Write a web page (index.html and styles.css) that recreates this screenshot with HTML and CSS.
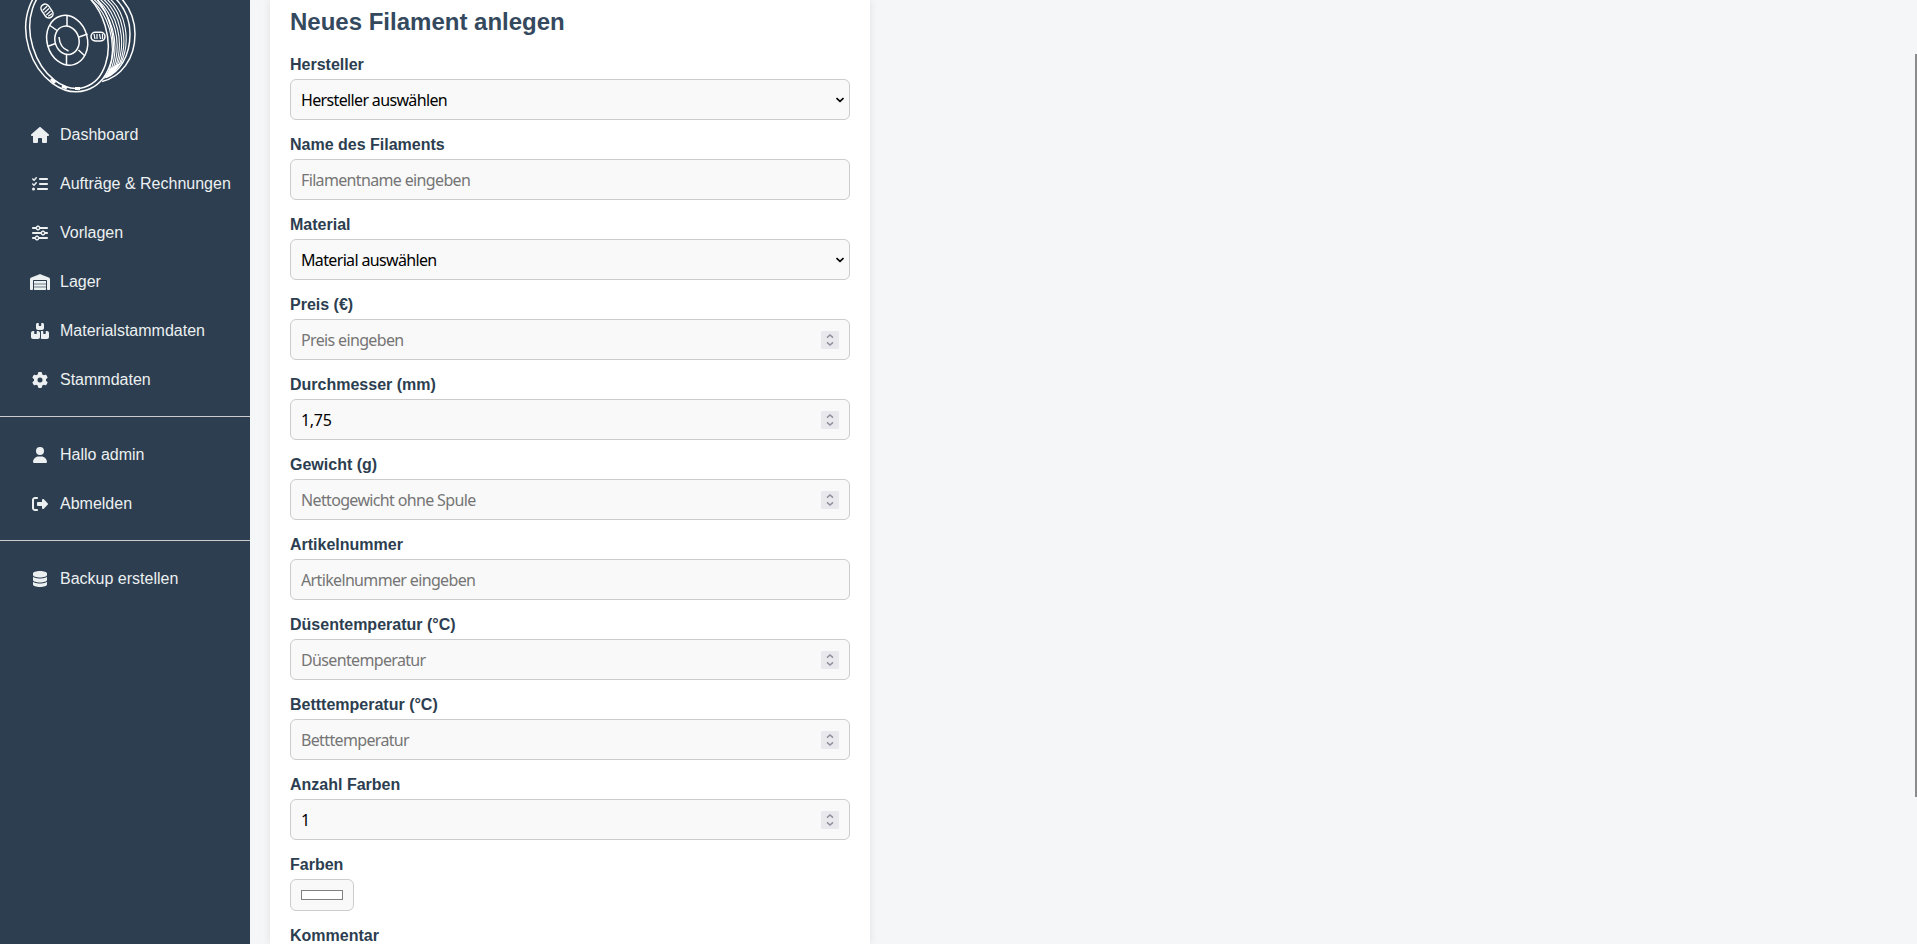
FILE: index.html
```html
<!DOCTYPE html>
<html lang="de">
<head>
<meta charset="utf-8">
<title>Neues Filament anlegen</title>
<link rel="stylesheet" href="styles.css">
</head>
<body>
<svg width="0" height="0" class="defs">
  <symbol id="spin" viewBox="0 0 18 18"><path d="M6 6.600 9 4l3 2.600M6 11.400 9 14l3-2.600" fill="none" stroke="#8f8f9d" stroke-width="1.500"/></symbol>
  <symbol id="chev" viewBox="0 0 8 6"><path d="M.5 1 4 4.300 7.500 1" fill="none" stroke="#000" stroke-width="1.600"/></symbol>
</svg>
<div class="layout">
  <aside class="sidebar">
    <svg class="logo" viewBox="0 0 150 110" fill="none" stroke="#fff" stroke-width="1.500">
      <path d="M121-2C130 8 135 20 135 34 135 59 121 77 102 81.500M115-2C125 8 130 20 130 34 130 57 119 72 106 77.500"/>
      <g stroke-width="1.100">
        <path d="M89-2C108 12 118 42 109 72"/>
        <path d="M92-2C111 12 121 42 111 70"/>
        <path d="M95-2C114 12 123 42 113 69"/>
        <path d="M98.500-2C117 12 125 42 115 68"/>
        <path d="M102-2C120 12 127 42 117 66"/>
        <path d="M105.500-2C123 12 129 42 119 65"/>
        <path d="M109-2C126 12 131 42 121 63"/>
      </g>
      <path d="M110 68.500 122 62 114 73 103 79.500Z" fill="#fff" stroke="none"/>
      <ellipse cx="69.500" cy="36.500" rx="42.400" ry="56.300" transform="rotate(-17 69.500 36.500)"/>
      <ellipse cx="69" cy="36.500" rx="37.700" ry="53" transform="rotate(-17 69 36.500)"/>
      <ellipse cx="67.200" cy="40.300" rx="20.200" ry="25.200" transform="rotate(-15 67.200 40.300)"/>
      <ellipse cx="67" cy="40.300" rx="12" ry="14.400" transform="rotate(-15 67 40.300)"/>
      <path d="M67 15.500v10.500M79 37l8.500-3M78.500 50l6.500 6M66.500 54.500v10.500M47.500 46.500l8-3M50 25.500l7 5M59 37c.5 7 4 12 9.500 14"/>
      <g transform="rotate(56 47 11)"><rect x="39.500" y="6.800" width="15" height="8.400" rx="4.200"/><path d="M43 8l1 6M46 8l1 6M49 8l1 6M52 8v5" stroke-width="1.200"/></g>
      <rect x="91" y="32.300" width="14" height="8.600" rx="4.300"/><path d="M94 34l1 5M97 34v5M99.500 34l1 5M102.500 34v5" stroke-width="1.200"/>
      <path d="M51 79l4 4M62 86l5 2M75 88.500h5" stroke-width="3"/>
    </svg>
    <nav class="nav">
      <a class="item"><span class="ico"><svg viewBox="0 0 576 512"><path d="M575.800 255.500c0 18-15 32.100-32 32.100h-32l.7 160.200c0 2.700-.2 5.400-.5 8.100V472c0 22.100-17.900 40-40 40H392c-22.100 0-40-17.900-40-40V384c0-17.700-14.300-32-32-32H256c-17.700 0-32 14.300-32 32v88c0 22.100-17.900 40-40 40H104c-22.100 0-40-17.900-40-40V287.600H32c-18 0-32-14-32-32.100 0-9 3-17 10-24L266.400 8c7-7 15-8 22-8s15 2 21 7L564.800 231.500c8 7 12 15 11 24z"/></svg></span>Dashboard</a>
      <a class="item"><span class="ico"><svg viewBox="0 0 512 512"><path d="M152.100 38.200c9.900 8.900 10.700 24 1.800 33.900l-72 80c-4.400 4.900-10.600 7.800-17.200 7.900s-12.900-2.400-17.600-7L7 113C-2.300 103.600-2.300 88.400 7 79s24.600-9.400 33.900 0l22.100 22.100 55.100-61.200c8.900-9.900 24-10.700 33.900-1.800zm0 160c9.900 8.900 10.700 24 1.800 33.900l-72 80c-4.400 4.900-10.600 7.800-17.200 7.900s-12.900-2.400-17.600-7L7 273c-9.400-9.400-9.400-24.600 0-33.900s24.600-9.400 33.900 0l22.100 22.100 55.100-61.200c8.900-9.900 24-10.700 33.900-1.800zM224 96c0-17.700 14.300-32 32-32H480c17.700 0 32 14.300 32 32s-14.300 32-32 32H256c-17.700 0-32-14.300-32-32zM224 256c0-17.700 14.300-32 32-32H480c17.700 0 32 14.300 32 32s-14.300 32-32 32H256c-17.700 0-32-14.300-32-32zM160 416c0-17.700 14.300-32 32-32H480c17.700 0 32 14.300 32 32s-14.300 32-32 32H192c-17.700 0-32-14.300-32-32zM48 368a48 48 0 1 1 0 96 48 48 0 1 1 0-96z"/></svg></span>Aufträge &amp; Rechnungen</a>
      <a class="item"><span class="ico"><svg viewBox="0 0 512 512"><path d="M0 416c0 17.700 14.300 32 32 32l54.700 0c12.300 28.300 40.500 48 73.300 48s61-19.700 73.300-48L480 448c17.700 0 32-14.300 32-32s-14.300-32-32-32l-246.700 0c-12.300-28.300-40.500-48-73.300-48s-61 19.700-73.300 48L32 384c-17.700 0-32 14.300-32 32zm128 0a32 32 0 1 1 64 0 32 32 0 1 1 -64 0zM320 256a32 32 0 1 1 64 0 32 32 0 1 1 -64 0zm32-80c-32.800 0-61 19.700-73.300 48L32 224c-17.700 0-32 14.300-32 32s14.300 32 32 32l246.700 0c12.300 28.300 40.500 48 73.300 48s61-19.700 73.300-48l54.700 0c17.700 0 32-14.300 32-32s-14.300-32-32-32l-54.700 0c-12.300-28.300-40.500-48-73.300-48zM192 128a32 32 0 1 1 0-64 32 32 0 1 1 0 64zm73.300-64C253 35.700 224.800 16 192 16s-61 19.700-73.300 48L32 64C14.300 64 0 78.300 0 96s14.300 32 32 32l86.700 0c12.300 28.300 40.500 48 73.300 48s61-19.700 73.300-48L480 128c17.700 0 32-14.300 32-32s-14.300-32-32-32L265.300 64z"/></svg></span>Vorlagen</a>
      <a class="item"><span class="ico"><svg viewBox="0 0 640 512"><path d="M0 488V171.300c0-26.200 15.900-49.700 40.200-59.400L308.100 4.800c7.600-3.100 16.100-3.100 23.800 0L599.800 111.900c24.300 9.700 40.200 33.300 40.200 59.400V488c0 13.300-10.700 24-24 24H568c-13.300 0-24-10.700-24-24V224c0-17.700-14.300-32-32-32H128c-17.700 0-32 14.300-32 32V488c0 13.300-10.700 24-24 24H24c-13.300 0-24-10.700-24-24zm488 24l-336 0c-13.300 0-24-10.700-24-24V432H512l0 56c0 13.300-10.700 24-24 24zM128 400V336H512v64H128zm0-96V224H512l0 80H128z"/><path d="M128 224H512V512H128z" opacity=".35"/></svg></span>Lager</a>
      <a class="item"><span class="ico"><svg viewBox="0 0 576 512"><path d="M248 0H208c-26.500 0-48 21.500-48 48V160c0 35.300 28.700 64 64 64H352c35.300 0 64-28.700 64-64V48c0-26.500-21.500-48-48-48H328V80c0 8.800-7.200 16-16 16H264c-8.800 0-16-7.200-16-16V0zM64 256c-35.300 0-64 28.700-64 64V448c0 35.300 28.700 64 64 64H224c35.300 0 64-28.700 64-64V320c0-35.300-28.700-64-64-64H184v80c0 8.800-7.200 16-16 16H120c-8.800 0-16-7.200-16-16V256H64zM352 512H512c35.300 0 64-28.700 64-64V320c0-35.300-28.700-64-64-64H472v80c0 8.800-7.200 16-16 16H408c-8.800 0-16-7.200-16-16V256H352c-15 0-28.800 5.100-39.700 13.800c4.900 10.400 7.700 22 7.700 34.200V464c0 12.200-2.800 23.800-7.700 34.200C323.200 506.900 337 512 352 512z"/></svg></span>Materialstammdaten</a>
      <a class="item"><span class="ico"><svg viewBox="0 0 512 512"><path d="M495.900 166.600c3.200 8.700 .5 18.400-6.400 24.600l-43.300 39.400c1.100 8.300 1.700 16.800 1.700 25.400s-.6 17.100-1.700 25.400l43.300 39.400c6.900 6.200 9.600 15.900 6.400 24.600c-4.400 11.900-9.700 23.300-15.800 34.300l-4.700 8.100c-6.600 11-14 21.400-22.100 31.200c-5.900 7.200-15.700 9.600-24.500 6.800l-55.700-17.700c-13.400 10.300-28.200 18.900-44 25.400l-12.500 57.100c-2 9.100-9 16.300-18.200 17.800c-13.800 2.300-28 3.500-42.500 3.500s-28.700-1.200-42.500-3.500c-9.200-1.500-16.200-8.700-18.200-17.800l-12.500-57.100c-15.800-6.500-30.600-15.100-44-25.400L83.100 425.900c-8.800 2.800-18.600 .3-24.500-6.800c-8.100-9.800-15.500-20.200-22.100-31.200l-4.700-8.100c-6.100-11-11.400-22.400-15.800-34.300c-3.200-8.700-.5-18.400 6.400-24.600l43.300-39.400C64.600 273.100 64 264.600 64 256s.6-17.100 1.700-25.400L22.400 191.200c-6.900-6.200-9.600-15.900-6.400-24.600c4.400-11.900 9.700-23.300 15.800-34.300l4.700-8.100c6.600-11 14-21.400 22.100-31.200c5.900-7.200 15.700-9.600 24.500-6.800l55.700 17.700c13.400-10.300 28.200-18.900 44-25.400l12.500-57.100c2-9.100 9-16.300 18.200-17.800C227.300 1.200 241.500 0 256 0s28.700 1.200 42.500 3.500c9.200 1.500 16.200 8.700 18.200 17.800l12.500 57.100c15.800 6.500 30.600 15.100 44 25.400l55.700-17.700c8.800-2.800 18.600-.3 24.500 6.800c8.100 9.800 15.500 20.200 22.100 31.200l4.700 8.100c6.100 11 11.400 22.400 15.800 34.300zM256 336a80 80 0 1 0 0-160 80 80 0 1 0 0 160z"/></svg></span>Stammdaten</a>
      <hr class="rule">
      <a class="item"><span class="ico"><svg viewBox="0 0 448 512"><path d="M224 256A128 128 0 1 0 224 0a128 128 0 1 0 0 256zm-45.700 48C79.800 304 0 383.800 0 482.300C0 498.700 13.300 512 29.700 512H418.300c16.400 0 29.700-13.300 29.700-29.700C448 383.800 368.200 304 269.700 304H178.300z"/></svg></span>Hallo admin</a>
      <a class="item"><span class="ico"><svg viewBox="0 0 512 512"><path d="M377.900 105.900L500.700 228.700c7.200 7.200 11.300 17.100 11.300 27.300s-4.100 20.100-11.300 27.300L377.900 406.100c-6.400 6.400-15 9.900-24 9.900c-18.700 0-33.900-15.200-33.900-33.900l0-62.100-128 0c-17.700 0-32-14.300-32-32l0-64c0-17.700 14.300-32 32-32l128 0 0-62.100c0-18.700 15.200-33.900 33.900-33.900c9 0 17.600 3.600 24 9.900zM160 96L96 96c-17.700 0-32 14.300-32 32l0 256c0 17.700 14.300 32 32 32l64 0c17.700 0 32 14.300 32 32s-14.300 32-32 32l-64 0c-53 0-96-43-96-96L0 128C0 75 43 32 96 32l64 0c17.700 0 32 14.300 32 32s-14.300 32-32 32z"/></svg></span>Abmelden</a>
      <hr class="rule">
      <a class="item"><span class="ico"><svg viewBox="0 0 448 512"><path d="M448 80v48c0 44.200-100.300 80-224 80S0 172.200 0 128V80C0 35.800 100.300 0 224 0S448 35.800 448 80zM393.200 214.700c20.800-7.400 39.900-16.900 54.800-28.600V288c0 44.200-100.300 80-224 80S0 332.200 0 288V186.100c14.900 11.800 34 21.200 54.800 28.600C99.700 230.700 159.500 240 224 240s124.300-9.300 169.200-25.300zM0 346.100c14.900 11.800 34 21.200 54.800 28.600C99.700 390.700 159.500 400 224 400s124.300-9.300 169.200-25.300c20.800-7.400 39.900-16.900 54.800-28.600V432c0 44.200-100.300 80-224 80S0 476.200 0 432V346.100z"/></svg></span>Backup erstellen</a>
    </nav>
  </aside>
  <main class="main">
    <form class="card">
      <h2 class="title">Neues Filament anlegen</h2>
      <label class="label">Hersteller</label>
      <div class="field select"><select class="control"><option>Hersteller auswählen</option></select><svg class="chev"><use href="#chev"/></svg></div>
      <label class="label">Name des Filaments</label>
      <div class="field"><input class="control" placeholder="Filamentname eingeben"></div>
      <label class="label">Material</label>
      <div class="field select"><select class="control"><option>Material auswählen</option></select><svg class="chev"><use href="#chev"/></svg></div>
      <label class="label">Preis (€)</label>
      <div class="field"><input class="control" placeholder="Preis eingeben"><svg class="spin"><use href="#spin"/></svg></div>
      <label class="label">Durchmesser (mm)</label>
      <div class="field"><input class="control number" value="1,75"><svg class="spin"><use href="#spin"/></svg></div>
      <label class="label">Gewicht (g)</label>
      <div class="field"><input class="control" placeholder="Nettogewicht ohne Spule"><svg class="spin"><use href="#spin"/></svg></div>
      <label class="label">Artikelnummer</label>
      <div class="field"><input class="control" placeholder="Artikelnummer eingeben"></div>
      <label class="label">Düsentemperatur (°C)</label>
      <div class="field"><input class="control" placeholder="Düsentemperatur"><svg class="spin"><use href="#spin"/></svg></div>
      <label class="label">Betttemperatur (°C)</label>
      <div class="field"><input class="control" placeholder="Betttemperatur"><svg class="spin"><use href="#spin"/></svg></div>
      <label class="label">Anzahl Farben</label>
      <div class="field"><input class="control number" value="1"><svg class="spin"><use href="#spin"/></svg></div>
      <label class="label">Farben</label>
      <div class="field color"><span class="swatch"></span></div>
      <label class="label">Kommentar</label>
    </form>
  </main>
  <div class="scrollbar"></div>
</div>
</body>
</html>
```
FILE: styles.css
```css
* { box-sizing: border-box; }
body {
  margin: 0;
  height: 944px;
  overflow: hidden;
  background: #f4f6f8;
  font: 16px/18px "Liberation Sans", Arial, sans-serif;
  color: #2c3e50;
}
.defs { display: block; }
.layout { display: flex; height: 944px; overflow: hidden; }
.sidebar { width: 250px; flex: none; background: #2c3e50; }
.logo { display: block; width: 150px; height: 110px; }
.item {
  display: flex;
  align-items: center;
  gap: 10px;
  height: 49px;
  padding-left: 30px;
  color: #ecf0f1;
  white-space: nowrap;
}
.ico { width: 20px; height: 16px; display: flex; justify-content: center; }
.ico svg { height: 16px; fill: #ecf0f1; overflow: visible; }
.rule { height: 1px; margin: 12px 0 13px; border: 0; background: #ccc; }
.main { flex: 1; padding-left: 20px; }
.card {
  width: 600px;
  height: 944px;
  padding: 8px 20px 0;
  background: #fff;
  box-shadow: 0 0 8px rgba(0, 0, 0, .09);
}
.title { margin: 0 0 20px; font-size: 24px; line-height: 28px; color: #34495e; }
.label { display: block; height: 18px; margin-bottom: 5px; font-weight: bold; }
.field {
  display: flex;
  align-items: center;
  height: 41px;
  margin-bottom: 16px;
  padding: 0 10px;
  border: 1px solid #ccc;
  border-radius: 6px;
  background: #f9f9f9;
}
.select { padding-right: 5px; }
.control {
  appearance: none;
  flex: 1;
  min-width: 0;
  height: 24px;
  padding: 0;
  border: 0;
  outline: 0;
  background: none;
  color: #000;
  font: 16px/24px "Noto Sans", Tahoma, sans-serif;
  letter-spacing: -.65px;
}
.number { letter-spacing: -.3px; }
.control::placeholder { color: #757575; opacity: 1; }
.spin { width: 18px; height: 18px; background: #e9e9ed; }
.chev { width: 8px; height: 6px; }
.color { width: 64px; height: 32px; }
.swatch { width: 42px; height: 10px; border: 1px solid #808080; background: #fff; }
.scrollbar { width: 2px; height: 743px; margin-top: 54px; background: #8b8b8b; }
```
